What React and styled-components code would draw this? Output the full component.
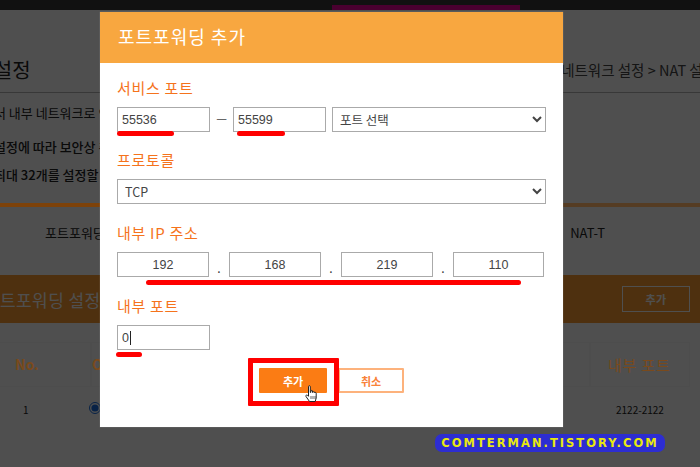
import React from 'react';
import styled, { createGlobalStyle } from 'styled-components';

const Global = createGlobalStyle`
  html, body { margin: 0; padding: 0; background: #fff; }
  body { font-family: "Noto Sans CJK KR", "Noto Sans", sans-serif; }
  * { box-sizing: border-box; }
`;

const Page = styled.div`
  position: relative;
  width: 700px;
  height: 467px;
  overflow: hidden;
  background: #fff;
  color: #222;
`;

const TopBar = styled.div`
  height: 10px;
  background: #383838;
  padding: 5px 0 0 332px;
`;

const TopAccent = styled.div`
  width: 188px;
  height: 5px;
  background: #ef009b;
`;

const TitleRow = styled.div`
  height: 83px;
  border-bottom: 1px solid #b4b4b4;
  display: flex;
  justify-content: space-between;
  align-items: flex-start;
  padding-top: 46px;
  margin-left: -48px;
  margin-right: -16px;
`;

const PageTitle = styled.h1`
  margin: 0;
  font-size: 20px;
  line-height: 28px;
  font-weight: 400;
`;

const Crumb = styled.div`
  font-size: 14.5px;
  line-height: 24px;
  margin-top: 2px;
  color: #444;
`;

const Intro = styled.div`
  padding-top: 10px;
  margin-left: -6px;
  height: 110px;
`;

const IntroLine = styled.p`
  margin: 0 0 ${p => p.$gap || 8}px;
  font-size: 13px;
  line-height: 20px;
  font-weight: ${p => (p.$bold ? 500 : 400)};
  white-space: nowrap;
`;

/* sits above the dimmer: it stays brighter on the left than the dim can give */
const Rule = styled.div`
  position: relative;
  z-index: 1;
  height: 4px;
  background: linear-gradient(90deg, #7d420a 0, #7d420a 100px, #553c23 563px);
`;

const Tabs = styled.div`
  height: 68px;
  display: flex;
  justify-content: space-between;
  padding: 16px 95px 0 45px;
  font-size: 13px;
`;

const Band = styled.div`
  height: 48px;
  background: #fb9b30;
  display: flex;
  justify-content: space-between;
  align-items: center;
  padding: 0 10px 0 0;
  margin-left: -16px;
  color: #fff;
  font-size: 17px;
  letter-spacing: 0.4px;
`;

const BandButton = styled.div`
  width: 68px;
  height: 26px;
  border: 1px solid #fff;
  display: flex;
  align-items: center;
  justify-content: center;
  font-size: 11px;
  font-weight: 700;
`;

const TableHead = styled.div`
  position: relative;
  z-index: 1;
  display: flex;
  height: 64px;
  padding: 19px 10px 0 0;
  color: #7a4a1c;
`;

const HeadCell = styled.div`
  width: ${p => p.$w}px;
  height: 45px;
  border: 1px solid #4d4d4d;
  border-left-width: ${p => (p.$first ? 0 : 1)}px;
  line-height: 43px;
  font-size: ${p => p.$size || 14}px;
  font-weight: ${p => p.$weight || 700};
  padding-left: ${p => p.$pad || 0}px;
  letter-spacing: ${p => p.$track || 0}px;
`;

const TableRow = styled.div`
  display: flex;
  align-items: center;
  height: 20px;
  margin-top: 12px;
  font-size: 10px;
`;

const RowCell = styled.div`
  width: ${p => p.$w}px;
  padding-left: ${p => p.$pad || 0}px;
`;

const Radio = styled.input`
  margin: 0;
  width: 12px;
  height: 12px;
  accent-color: #1b6fe0;
`;

const Dim = styled.div`
  position: absolute;
  inset: 0;
  background: rgba(0, 0, 0, 0.69);
`;

const Layer = styled.div`
  position: absolute;
  inset: 0;
  z-index: 2;
`;

const Modal = styled.div`
  position: absolute;
  left: 100px;
  top: 12px;
  width: 463px;
  height: 415px;
  background: #fff;
  box-shadow: 0 0 1px rgba(255, 255, 255, 0.4);
`;

const ModalHeader = styled.div`
  height: 51px;
  background: #f8a740;
  color: #fff;
  font-size: 18px;
  font-weight: 400;
  line-height: 49px;
  padding-left: 18px;
  letter-spacing: 1px;
`;

const ModalBody = styled.div`
  padding: 14px 17px 0;
`;

const Label = styled.div`
  height: 21px;
  margin-top: ${p => p.$top || 0}px;
  color: #f5731c;
  font-size: 15px;
  line-height: 21px;
  letter-spacing: 0.7px;
  font-weight: 400;
`;

const Row = styled.div`
  display: flex;
  align-items: center;
  margin-top: 9px;
`;

const Input = styled.input`
  width: ${p => p.$w || 93}px;
  height: 25px;
  border: 1px solid #aaa;
  background: #fff;
  padding: 0 4px;
  font-family: "Liberation Sans", sans-serif;
  font-size: 12.5px;
  color: #444;
  outline: none;
  text-align: ${p => p.$align || 'left'};
`;

const CaretBox = styled.div`
  width: 93px;
  height: 25px;
  border: 1px solid #aaa;
  padding: 0 4px;
  display: flex;
  align-items: center;
  font-family: "Liberation Sans", sans-serif;
  font-size: 12.5px;
  color: #444;
`;

const Caret = styled.span`
  width: 1px;
  height: 14px;
  margin-left: 1px;
  background: #222;
`;

const Dash = styled.div`
  width: 23px;
  padding-bottom: 4px;
  text-align: center;
  font-size: 12px;
  color: #444;
`;

const Select = styled.select`
  flex: 1;
  height: 25px;
  margin-left: ${p => p.$left || 0}px;
  border: 1px solid #aaa;
  background: #fff;
  color: #444;
  font-family: "Noto Sans CJK KR", sans-serif;
  font-size: 12.5px;
  padding-left: 3px;
  border-radius: 0;
`;

const Dot = styled.div`
  width: 20px;
  height: 25px;
  text-align: center;
  font-size: 12px;
  line-height: 31px;
  color: #333;
`;

const Actions = styled.div`
  display: flex;
  justify-content: center;
  gap: 11px;
  margin-top: 18px;
`;

const Button = styled.div`
  width: ${p => p.$w}px;
  height: 25px;
  border-radius: 1px;
  display: flex;
  align-items: center;
  justify-content: center;
  font-size: 11px;
  font-weight: 700;
  background: ${p => (p.$primary ? '#fb7c14' : '#fff')};
  color: ${p => (p.$primary ? '#fff' : '#f9823a')};
  border: ${p => (p.$primary ? 'none' : '2px solid #fdb27c')};
`;

const RedLine = styled.div`
  position: absolute;
  left: ${p => p.$x}px;
  top: ${p => p.$y}px;
  width: ${p => p.$w}px;
  height: 5px;
  border-radius: 3px;
  background: #f00;
  filter: blur(0.5px);
`;

const RedBox = styled.div`
  position: absolute;
  left: 248px;
  top: 358px;
  width: 91px;
  height: 48px;
  border: 5px solid #f00;
  border-radius: 1px;
`;

const Hand = styled.svg`
  position: absolute;
  left: 305px;
  top: 385px;
`;

const Watermark = styled.div`
  position: absolute;
  left: 435px;
  top: 434px;
  width: 230px;
  height: 18px;
  border-radius: 7px;
  background: #2d2dd2;
  color: #e8e80e;
  font-family: "DejaVu Sans", sans-serif;
  font-weight: 700;
  font-size: 11.5px;
  line-height: 18px;
  text-align: center;
  letter-spacing: 2px;
  white-space: nowrap;
`;

const App = () => (
  <Page>
    <Global />
    <TopBar><TopAccent /></TopBar>
    <TitleRow>
      <PageTitle>NAT 설정</PageTitle>
      <Crumb>네트워크 설정 &gt; NAT 설정</Crumb>
    </TitleRow>
    <Intro>
      <IntroLine $gap={14}>서 내부 네트워크로 연결합니다</IntroLine>
      <IntroLine $bold>설정에 따라 보안상 취약할 수 있습니다</IntroLine>
      <IntroLine $bold>최대 32개를 설정할 수 있습니다</IntroLine>
    </Intro>
    <Rule />
    <Tabs>
      <span>포트포워딩</span>
      <span>NAT-T</span>
    </Tabs>
    <Band>
      <span>포트포워딩 설정</span>
      <BandButton>추가</BandButton>
    </Band>
    <TableHead>
      <HeadCell $first $w={91} $pad={15}>No.</HeadCell>
      <HeadCell $w={499}>On</HeadCell>
      <HeadCell $w={100} $pad={17} $size={15} $track={0.8} $weight={400}>내부 포트</HeadCell>
    </TableHead>
    <TableRow>
      <RowCell $w={89} $pad={23}>1</RowCell>
      <RowCell $w={527}><Radio type="radio" defaultChecked /></RowCell>
      <RowCell $w={84}>2122-2122</RowCell>
    </TableRow>

    <Dim />

    <Layer>
      <Modal>
        <ModalHeader>포트포워딩 추가</ModalHeader>
        <ModalBody>
          <Label>서비스 포트</Label>
          <Row>
            <Input defaultValue="55536" />
            <Dash>—</Dash>
            <Input defaultValue="55599" />
            <Select $left={6}><option>포트 선택</option></Select>
          </Row>
          <Label $top={17}>프로토콜</Label>
          <Row>
            <Select><option>TCP</option></Select>
          </Row>
          <Label $top={18}>내부 IP 주소</Label>
          <Row>
            <Input $w={92} $align="center" defaultValue="192" />
            <Dot>.</Dot>
            <Input $w={92} $align="center" defaultValue="168" />
            <Dot>.</Dot>
            <Input $w={92} $align="center" defaultValue="219" />
            <Dot>.</Dot>
            <Input $w={91} $align="center" defaultValue="110" />
          </Row>
          <Label $top={18}>내부 포트</Label>
          <Row>
            <CaretBox>0<Caret /></CaretBox>
          </Row>
          <Actions>
            <Button $primary $w={68}>추가</Button>
            <Button $w={66}>취소</Button>
          </Actions>
        </ModalBody>
      </Modal>

      <RedLine $x={117} $y={131} $w={57} />
      <RedLine $x={237} $y={131} $w={48} />
      <RedLine $x={146} $y={280} $w={375} />
      <RedLine $x={116} $y={352} $w={26} />
      <RedBox />
      <Hand width="14" height="18" viewBox="0 0 14 18">
        <path
          d="M3.5 1.5c0-1 1.8-1 1.8 0v6l.6-.2V6c0-.8 1.6-.8 1.6 0v1.4l.6-.1c0-.8 1.5-.8 1.5 0v.6c.2-.7 1.6-.6 1.6.2V13l-1 3.5H4.5L1 11.5c-.6-1 .6-2 1.5-1.2l1 1z"
          fill="#fff"
          stroke="#222"
          strokeWidth="1"
          strokeLinejoin="round"
        />
        <path d="M6 11v3M8 11v3M10 11v3" stroke="#222" strokeWidth="0.7" />
      </Hand>
      <Watermark>COMTERMAN.TISTORY.COM</Watermark>
    </Layer>
  </Page>
);

export default App;
